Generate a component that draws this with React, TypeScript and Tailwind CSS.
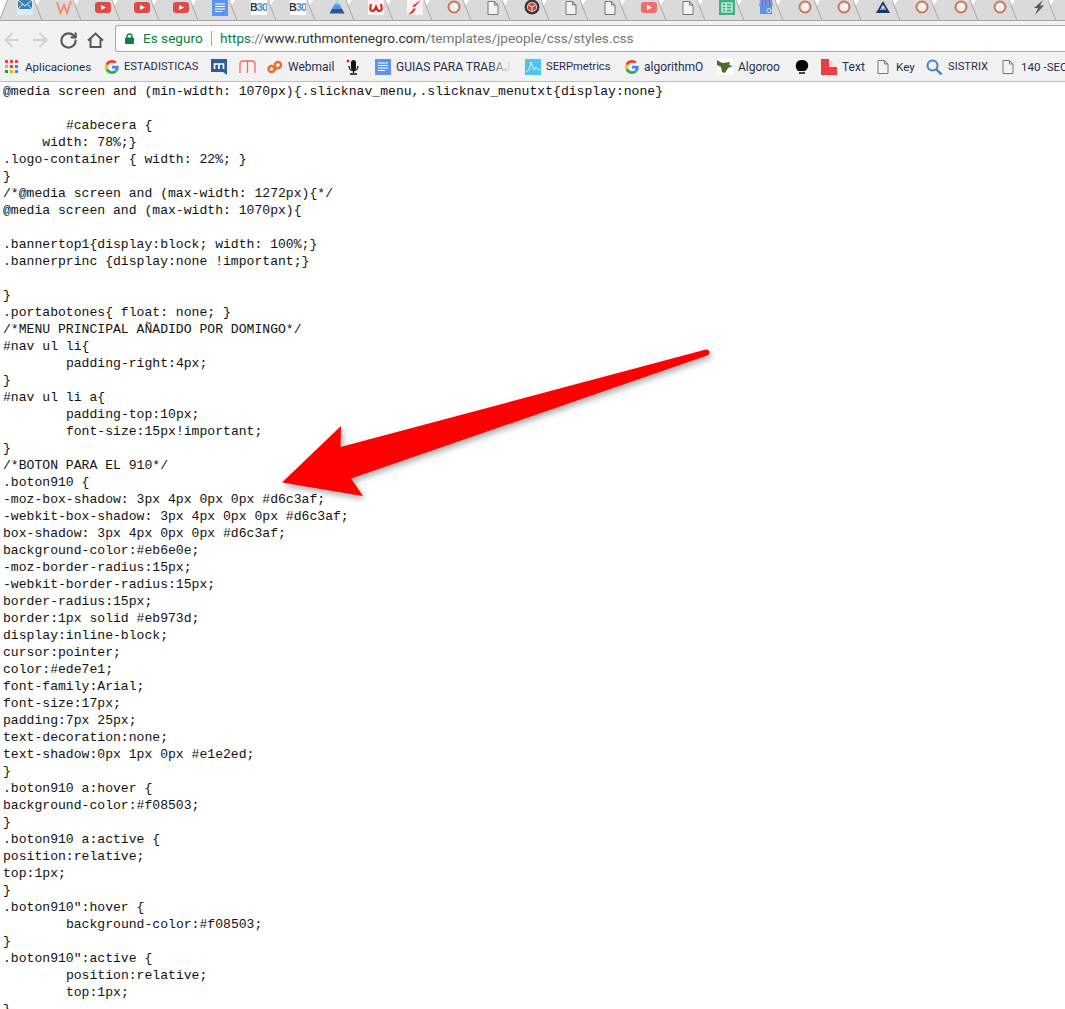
import type { ReactNode } from 'react';
import { ArrowLeft, ArrowRight, RotateCw } from 'lucide-react';

const CODE = `@media screen and (min-width: 1070px){.slicknav_menu,.slicknav_menutxt{display:none}

\t#cabecera {
     width: 78%;}
.logo-container { width: 22%; }
}
/*@media screen and (max-width: 1272px){*/
@media screen and (max-width: 1070px){

.bannertop1{display:block; width: 100%;}
.bannerprinc {display:none !important;}

}
.portabotones{ float: none; }
/*MENU PRINCIPAL AÑADIDO POR DOMINGO*/
#nav ul li{
\tpadding-right:4px;
}
#nav ul li a{
\tpadding-top:10px;
\tfont-size:15px!important;
}
/*BOTON PARA EL 910*/
.boton910 {
-moz-box-shadow: 3px 4px 0px 0px #d6c3af;
-webkit-box-shadow: 3px 4px 0px 0px #d6c3af;
box-shadow: 3px 4px 0px 0px #d6c3af;
background-color:#eb6e0e;
-moz-border-radius:15px;
-webkit-border-radius:15px;
border-radius:15px;
border:1px solid #eb973d;
display:inline-block;
cursor:pointer;
color:#ede7e1;
font-family:Arial;
font-size:17px;
padding:7px 25px;
text-decoration:none;
text-shadow:0px 1px 0px #e1e2ed;
}
.boton910 a:hover {
background-color:#f08503;
}
.boton910 a:active {
position:relative;
top:1px;
}
.boton910":hover {
\tbackground-color:#f08503;
}
.boton910":active {
\tposition:relative;
\ttop:1px;
}
}`;

function Ico({ children, w = 16, h = 16 }: { children: ReactNode; w?: number; h?: number }) {
  return (
    <svg width={w} height={h} viewBox={`0 0 ${w} ${h}`} className="block shrink-0">
      {children}
    </svg>
  );
}

function Youtube({ faded }: { faded?: boolean }) {
  return (
    <Ico>
      <rect x="0" y="2" width="16" height="11" rx="3" fill={faded ? '#ee6e6e' : '#dd4a4a'} />
      <path d="M6 5l5 2.500-5 2.500z" fill="#fff" />
    </Ico>
  );
}

function DocsBlue({ size = 16 }: { size?: number }) {
  return (
    <svg width={size} height={size} viewBox="0 0 16 16" className="block shrink-0">
      <rect width="16" height="16" fill="#5b95f0" />
      <path d="M3 4h10M3 6.500h10M3 9h10M3 11.500h7" stroke="#fff" strokeWidth="1" />
    </svg>
  );
}

function Ring() {
  return (
    <Ico>
      <circle cx="8" cy="7" r="5.500" fill="#f4ece8" stroke="#c9765c" strokeWidth="2" />
      <circle cx="9.500" cy="5.500" r="2" fill="#fff" />
    </Ico>
  );
}

function Page({ color = '#777' }: { color?: string }) {
  return (
    <Ico>
      <path d="M3 1.500h6.500l3.500 3.500v9.500H3zM9.500 1.500V5H13" fill="#f4f4f4" stroke={color} strokeWidth="1" />
    </Ico>
  );
}

function B30() {
  return (
    <div className="flex h-[15px] w-[16px] shrink-0 items-center justify-center overflow-hidden bg-white font-['Liberation_Sans',sans-serif] text-[11px] font-bold leading-none tracking-[-0.9px]">
      <span className="text-[#333]">B</span>
      <span className="text-[#4f8fcf]">30</span>
    </div>
  );
}

const FAVICONS: ReactNode[] = [
  <Ico key="mail">
    <rect width="16" height="15" fill="#dfeaf4" />
    <path d="M1 0h14v9H1z" fill="#3f7fb8" />
    <path d="M1 0l7 6 7-6M1 9l5-5M15 9l-5-5" fill="none" stroke="#e8f1f8" strokeWidth="1" />
  </Ico>,
  <Ico key="w">
    <path d="M1 2l3.500 11L8 5l3 8 4-12" fill="none" stroke="#f5876b" strokeWidth="1.800" />
  </Ico>,
  <Youtube key="yt1" />,
  <Youtube key="yt2" />,
  <Youtube key="yt3" />,
  <DocsBlue key="docs" />,
  <B30 key="b1" />,
  <B30 key="b2" />,
  <Ico key="tri">
    <path d="M8 0l2.700 4.500H5.300z" fill="#8fd0ee" />
    <path d="M5.300 4.500h5.400l2.500 4.500H2.800z" fill="#4f9ad6" />
    <path d="M2.800 9h10.400l2.300 4.500H.5z" fill="#34509a" />
  </Ico>,
  <Ico key="wred">
    <rect width="16" height="15" fill="#fdf3f3" />
    <path d="M3 4Q1 11 4.500 11 6.500 11 8 7q1.500 4 3.500 4Q15 11 13 4" fill="none" stroke="#d9252f" strokeWidth="2.200" />
  </Ico>,
  <Ico key="bolt">
    <rect width="16" height="15" fill="#fbf3f3" />
    <path d="M14 0L5 6l3 1-7 8 5-2 2-3 1-1-2-1z" fill="#dd3a3a" />
  </Ico>,
  <Ring key="r1" />,
  <Page key="p1" />,
  <Ico key="cube">
    <circle cx="8" cy="7" r="7.500" fill="#3a3a3a" />
    <circle cx="8" cy="7" r="5" fill="#e8d6d0" />
    <path d="M8 2.500l4 2.200v4.600L8 11.500 4 9.300V4.700z" fill="#c8453f" />
    <path d="M4 4.700L8 7l4-2.300M8 7v4.500" fill="none" stroke="#f3e3df" strokeWidth="1" />
  </Ico>,
  <Page key="p2" />,
  <Page key="p3" />,
  <Youtube key="yt4" faded />,
  <Page key="p4" />,
  <Ico key="sheet">
    <rect width="16" height="15" fill="#3fae82" />
    <path d="M3 3h10v9H3zM3 6h10M3 9h10M7 3v9" fill="none" stroke="#f2fbf7" strokeWidth="1.100" />
  </Ico>,
  <Ico key="store">
    <path d="M2 0h12l1 6H1z" fill="#7d93d6" />
    <path d="M5 0L4 6M8 0v6M11 0l1 6" stroke="#5a6fbd" strokeWidth="1" />
    <rect x="2" y="6" width="12" height="8" fill="#5a94e8" />
    <circle cx="11" cy="10.500" r="2" fill="none" stroke="#e6f0ff" strokeWidth="1" />
  </Ico>,
  <Ring key="r2" />,
  <Ring key="r3" />,
  <Ico key="pyr">
    <path d="M8 1l7 12H1z" fill="#1f3557" />
    <path d="M8 4l3.500 6h-7z" fill="#6f9fd0" />
    <circle cx="8" cy="7.500" r="1.200" fill="#e8f1fa" />
  </Ico>,
  <Ring key="r4" />,
  <Ring key="r5" />,
  <Ring key="r6" />,
  <Ico key="boltg">
    <path d="M12 0L3 8h4L4 15l9-9.500H9z" fill="#5a5a5a" />
  </Ico>,
];

function Tab({ icon }: { icon: ReactNode }) {
  return (
    <div className="relative flex h-full w-[39px] shrink-0 justify-center">
      {icon}
      <svg width="14" height="21" viewBox="0 0 14 21" className="absolute -right-[3px] top-0">
        <path d="M0 0h7L3.500 5.500z" fill="#fff" />
        <path d="M1 0l8 20.500" fill="none" stroke="#a8a8a8" strokeWidth="1" />
      </svg>
    </div>
  );
}

function TabStrip() {
  return (
    <div className="relative flex h-[21px] overflow-hidden border-b border-[#a3a3a3] bg-[#dadada] pl-[5px]">
      <svg width="9" height="20" viewBox="0 0 9 20" className="absolute left-0 top-0">
        <path d="M0 0h7.500L0 19z" fill="#fff" />
        <path d="M0 19L7.500 0" fill="none" stroke="#a8a8a8" strokeWidth="1" />
      </svg>
      {FAVICONS.map((icon, i) => (
        <Tab key={i} icon={icon} />
      ))}
    </div>
  );
}

function HomeIcon() {
  return (
    <svg width="17" height="16" viewBox="0 0 17 16" fill="none" stroke="#5a5a5a" strokeWidth="2" className="block">
      <path d="M1 8.500L8.500 1.500 16 8.500M3.500 7v8h10V7" />
    </svg>
  );
}

function Toolbar() {
  return (
    <div className="flex h-[31px] items-start bg-[#f2f2f2]">
      <div className="flex w-[115px] shrink-0 items-center pl-px pt-[8px]">
        <ArrowLeft size={22} strokeWidth={2} color="#cfcfcf" />
        <ArrowRight size={22} strokeWidth={2} color="#cfcfcf" className="ml-[6px]" />
        <RotateCw size={19} strokeWidth={2.8} color="#5a5a5a" className="ml-[8px]" />
        <div className="ml-[9px]">
          <HomeIcon />
        </div>
      </div>
      <div className="mt-[4px] flex h-[27px] flex-1 items-center rounded-l-[3px] border border-r-0 border-[#a9a9a9] bg-white font-['Roboto',sans-serif] text-[13.6px] leading-none">
        <svg width="9" height="11" viewBox="0 0 9 11" className="ml-[9px] shrink-0">
          <path d="M2 5V3.500a2.500 2.500 0 015 0V5" fill="none" stroke="#0b8043" strokeWidth="1.400" />
          <rect y="4.500" width="9" height="6.500" rx="1" fill="#0b8043" />
        </svg>
        <span className="ml-[9px] w-[59px] whitespace-nowrap text-[#0b8043]">Es seguro</span>
        <span className="ml-[9px] h-[15px] w-px bg-[#a9a9a9]" />
        <span className="ml-[8px] whitespace-nowrap text-[#777]">
          <span className="text-[#0b8043]">https</span>://
          <span className="text-[#333]">www.ruthmontenegro.com</span>/templates/jpeople/css/styles.css
        </span>
      </div>
    </div>
  );
}

function GoogleG() {
  return (
    <svg width="14" height="14" viewBox="0 0 48 48" className="block shrink-0">
      <path fill="#EA4335" d="M24 9.500c3.500 0 6.700 1.200 9.200 3.600l6.900-6.900C35.900 2.400 30.500 0 24 0 14.600 0 6.500 5.400 2.600 13.200l8 6.200C12.400 13.700 17.700 9.500 24 9.500z" />
      <path fill="#4285F4" d="M47 24.500c0-1.600-.1-3.100-.4-4.500H24v9h12.900c-.6 3-2.200 5.500-4.800 7.200l7.700 6C44.300 37.900 47 31.800 47 24.500z" />
      <path fill="#FBBC05" d="M10.500 28.600c-.5-1.400-.8-3-.8-4.600s.3-3.200.8-4.600l-8-6.200C.9 16.500 0 20.100 0 24s.9 7.500 2.600 10.800l7.900-6.200z" />
      <path fill="#34A853" d="M24 48c6.500 0 11.900-2.100 15.900-5.800l-7.700-6c-2.200 1.500-4.900 2.300-8.200 2.300-6.300 0-11.600-4.200-13.500-9.900l-8 6.200C6.500 42.600 14.600 48 24 48z" />
    </svg>
  );
}

function AppsGrid() {
  const colors = ['#e8453c', '#e8453c', '#e8453c', '#f4b400', '#e8453c', '#4285f4', '#0f9d58', '#f4b400', '#4285f4'];
  return (
    <div className="grid h-[13px] w-[13px] shrink-0 grid-cols-3 gap-[2px]">
      {colors.map((c, i) => (
        <span key={i} style={{ backgroundColor: c }} />
      ))}
    </div>
  );
}

function Label({ children, size = 'text-[12px]' }: { children: ReactNode; size?: string }) {
  return <span className={`block whitespace-nowrap leading-[14px] text-[#1f2f4f] ${size}`}>{children}</span>;
}

function BookmarksBar() {
  return (
    <div className="flex h-[30px] items-center overflow-hidden border-b border-[#bdbdbd] bg-[#f2f2f2] font-['Roboto',sans-serif]">
      <div className="ml-[5px] flex w-[100px] shrink-0 items-center gap-[7px]">
        <AppsGrid />
        <Label size="text-[11.6px]">Aplicaciones</Label>
      </div>
      <div className="flex w-[106px] shrink-0 items-center gap-[5px]">
        <GoogleG />
        <Label size="text-[11.2px]">ESTADISTICAS</Label>
      </div>
      <div className="w-[28px] shrink-0">
        <Ico>
          <path d="M0 0h16v16l-4-3H0z" fill="#2f5d9a" />
          <path d="M3.500 10V5h9v5M8 5v5" fill="none" stroke="#fff" strokeWidth="1.700" />
        </Ico>
      </div>
      <div className="w-[28px] shrink-0">
        <Ico w={17}>
          <path d="M1 14V4.500Q1 2 4 2h9q3 0 3 2.500V14M8.500 2v12" fill="none" stroke="#ee6a5f" strokeWidth="1.300" />
        </Ico>
      </div>
      <div className="flex w-[79px] shrink-0 items-center gap-[5px]">
        <Ico>
          <circle cx="4.500" cy="10" r="3" fill="none" stroke="#f26b2a" strokeWidth="2.400" />
          <path d="M8 12V6a3 3 0 113 3H8" fill="none" stroke="#f26b2a" strokeWidth="2.400" />
        </Ico>
        <Label>Webmail</Label>
      </div>
      <div className="w-[29px] shrink-0">
        <Ico w={15}>
          <circle cx="2" cy="2" r="1.500" fill="#e8262a" />
          <rect x="5" y="1" width="5" height="10" rx="2.500" fill="#111" />
          <path d="M3 7a4.500 4.500 0 009 0M7.500 12v2M4 15h7" fill="none" stroke="#111" strokeWidth="1.300" />
        </Ico>
      </div>
      <div className="flex w-[150px] shrink-0 items-center gap-[5px]">
        <DocsBlue />
        <div className="relative w-[116px] overflow-hidden">
          <Label>GUIAS PARA TRABAJAR</Label>
          <span className="absolute inset-y-0 right-0 w-[24px] bg-gradient-to-r from-transparent to-[#f2f2f2]" />
        </div>
      </div>
      <div className="flex w-[100px] shrink-0 items-center gap-[5px]">
        <Ico>
          <rect width="16" height="16" fill="#4fc3f0" />
          <path d="M1 13l3-2 2-8 3 8 2-3 2 3 2-1" fill="none" stroke="#e4f6fd" strokeWidth="1" />
        </Ico>
        <Label size="text-[11.2px]">SERPmetrics</Label>
      </div>
      <div className="flex w-[92px] shrink-0 items-center gap-[5px]">
        <GoogleG />
        <Label>algorithmO</Label>
      </div>
      <div className="flex w-[78px] shrink-0 items-center gap-[5px]">
        <Ico>
          <rect width="16" height="16" fill="#fff" />
          <path d="M0 1l5 3 8-1-1 3 4 1-5 2-3 5-3-1-1-5-4-2z" fill="#4e6b32" />
        </Ico>
        <Label>Algoroo</Label>
      </div>
      <div className="w-[26px] shrink-0">
        <Ico w={14}>
          <path d="M3 12Q0 9 1 5q1-4 6-4t6 4q1 4-3 7z" fill="#000" />
          <path d="M4 14h6" stroke="#444" strokeWidth="2" />
        </Ico>
      </div>
      <div className="flex w-[54px] shrink-0 items-center gap-[5px]">
        <Ico>
          <path d="M0 0h8v8h8v8H0z" fill="#ef3e42" />
          <path d="M8 0l8 8H8z" fill="#f8d8d8" />
        </Ico>
        <Label>Text</Label>
      </div>
      <div className="flex w-[51px] shrink-0 items-center gap-[5px]">
        <Page />
        <Label size="text-[11.6px]">Key</Label>
      </div>
      <div className="flex w-[74px] shrink-0 items-center gap-[6px]">
        <Ico>
          <circle cx="6.500" cy="6.500" r="5" fill="none" stroke="#3c82c8" strokeWidth="2" />
          <path d="M10.500 10.500l5 5" stroke="#3c82c8" strokeWidth="2.400" />
        </Ico>
        <Label size="text-[11.2px]">SISTRIX</Label>
      </div>
      <div className="flex shrink-0 items-center gap-[5px]">
        <Page />
        <Label size="text-[11.6px]">140 -SEO</Label>
      </div>
    </div>
  );
}

function RedArrow() {
  return (
    <svg
      width="1065"
      height="1009"
      viewBox="0 0 1065 1009"
      className="pointer-events-none absolute left-0 top-0 drop-shadow-[2px_3px_3px_rgba(0,0,0,0.35)]"
    >
      <path
        d="M706 349.500Q710 350 709.500 353Q709 355 707 355.500L351 478.500L363 496L282 482.500L341 426L340.500 447Z"
        fill="#ff0000"
      />
    </svg>
  );
}

export default function App() {
  return (
    <div className="relative h-[1009px] w-[1065px] overflow-hidden bg-white">
      <TabStrip />
      <Toolbar />
      <BookmarksBar />
      <pre className="pl-[3px] pt-[1px] font-['Liberation_Mono',monospace] text-[13.1px] leading-[17px] text-[#111] [tab-size:8]">
        {CODE}
      </pre>
      <RedArrow />
    </div>
  );
}
